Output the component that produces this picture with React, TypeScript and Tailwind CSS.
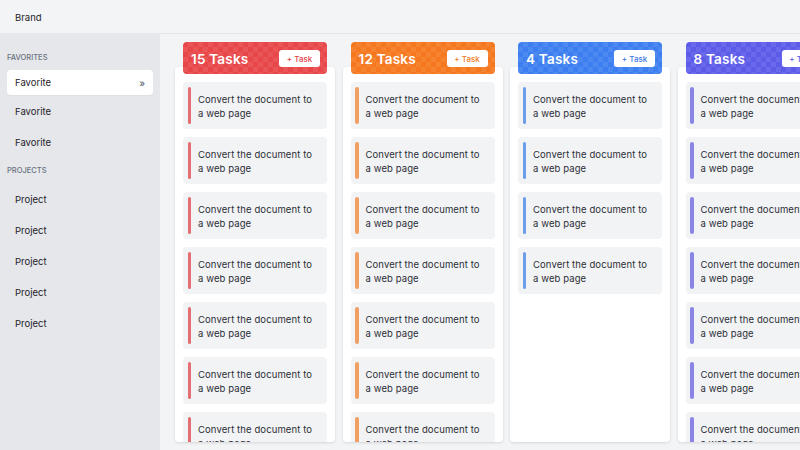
/** 各列の色設定 */
const COLUMNS = [
  { count: 15, head: "bg-[#e8474a]", text: "text-[#e04548]", bar: "bg-[#e46f72]", cards: 7 },
  { count: 12, head: "bg-[#f5781e]", text: "text-[#ee7a22]", bar: "bg-[#f1a065]", cards: 7 },
  { count: 4, head: "bg-[#3d7ff0]", text: "text-[#3b78de]", bar: "bg-[#6e9de8]", cards: 4 },
  { count: 8, head: "bg-[#5d5ce9]", text: "text-[#5d5ce9]", bar: "bg-[#8a85e4]", cards: 7 },
] as const;

const FAVORITES = ["Favorite", "Favorite", "Favorite"];
const PROJECTS = ["Project", "Project", "Project", "Project", "Project"];

function TaskCard({ bar }: { bar: string }) {
  return (
    <div className="flex h-[47px] shrink-0 items-stretch gap-[7px] rounded bg-[#f2f3f5] py-[5px] pl-[4.5px] pr-2">
      <div className={`w-[3.5px] shrink-0 rounded-full ${bar}`} />
      <p className="self-center pt-[2px] text-[9.5px] leading-[14px] tracking-[0.1px] text-[#2b2f36]">
        Convert the document to a web page
      </p>
    </div>
  );
}

function Column({ col }: { col: (typeof COLUMNS)[number] }) {
  return (
    <div className="flex w-[160px] shrink-0 flex-col">
      <div
        className={`relative z-10 mx-2 flex h-8 items-center justify-between rounded pl-2 pr-[7px] ${col.head} bg-[repeating-conic-gradient(rgba(255,255,255,0.08)_0_25%,transparent_0_50%)] bg-[length:10px_10px]`}
      >
        <span className="pt-[3px] text-[13.5px] font-semibold tracking-[0.2px] text-white">{col.count} Tasks</span>
        <button className={`flex h-[17px] w-[41px] items-center justify-center rounded-[3px] bg-white pt-px text-[8px] font-medium ${col.text}`}>
          + Task
        </button>
      </div>
      <div className="-mt-[7px] flex flex-1 flex-col gap-2 overflow-hidden rounded bg-white px-2 pt-[15px] shadow-[0_1px_3px_rgba(0,0,0,0.12)]">
        {Array.from({ length: col.cards }).map((_, i) => (
          <TaskCard key={i} bar={col.bar} />
        ))}
      </div>
    </div>
  );
}

export default function App() {
  return (
    <div className="flex h-[450px] w-[800px] flex-col overflow-hidden bg-[#f3f4f6] font-['Inter','Liberation_Sans',sans-serif] text-[#1f2328]">
      <header className="flex h-[34px] shrink-0 items-center border-b border-[#e6e7ea] bg-[#f3f4f6] px-[15px] pt-[3px] text-[9.5px]">
        Brand
      </header>

      <div className="flex min-h-0 flex-1">
        <aside className="w-[160px] shrink-0 bg-[#e5e7eb] px-[7px] pt-[11px]">
          <div className="flex h-6 items-center pt-[2px] text-[7.5px] font-medium text-[#6b7280]">FAVORITES</div>
          {FAVORITES.map((label, i) =>
            i === 0 ? (
              <div
                key={i}
                className="mt-px flex h-[25px] items-center justify-between rounded bg-white px-2 pt-[2px] text-[9.5px] shadow-[0_1px_1px_rgba(0,0,0,0.03)]"
              >
                {label}
                <span className="text-[10px] text-[#4b5563]">»</span>
              </div>
            ) : (
              <div key={i} className="flex h-[31px] items-center px-2 pt-[3px] text-[9.5px]">
                {label}
              </div>
            )
          )}
          <div className="flex h-[26px] items-center pt-[2px] text-[7.5px] font-medium text-[#6b7280]">PROJECTS</div>
          {PROJECTS.map((label, i) => (
            <div key={i} className="flex h-[31px] items-center px-2 pt-[3px] text-[9.5px]">
              {label}
            </div>
          ))}
        </aside>

        <main className="flex min-w-0 flex-1 gap-[7.5px] overflow-hidden pb-2 pl-[15px] pt-2">
          {COLUMNS.map((col) => (
            <Column key={col.count} col={col} />
          ))}
        </main>
      </div>
    </div>
  );
}
